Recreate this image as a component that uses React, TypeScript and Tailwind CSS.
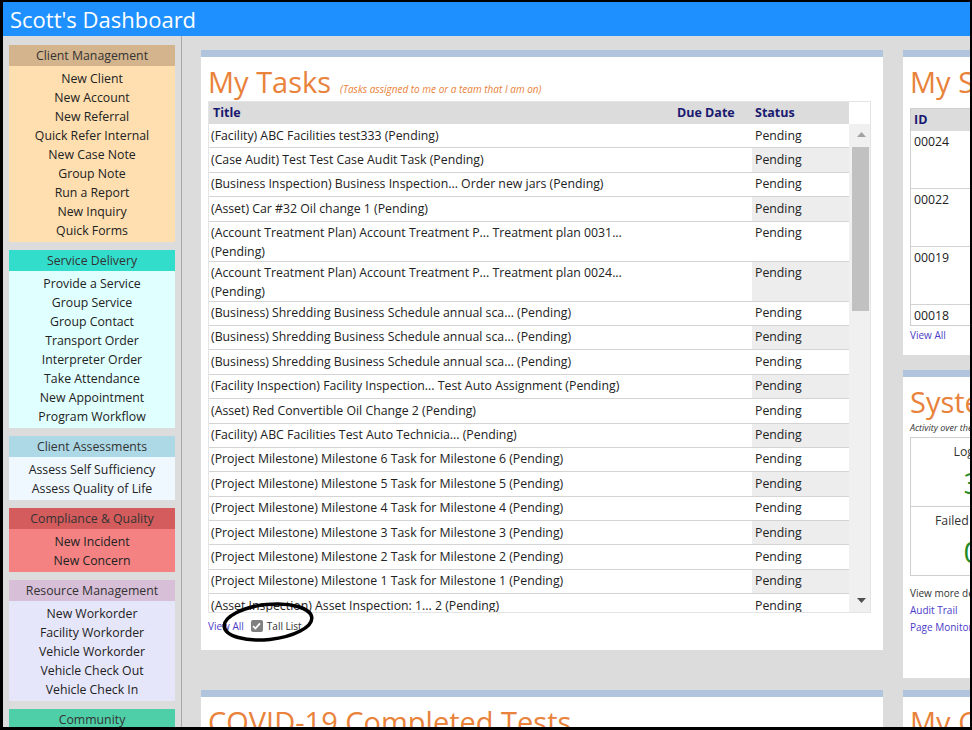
import React from 'react';

type Section = { title: string; head: string; body: string; items: string[] };

const sections: Section[] = [
  {
    title: 'Client Management',
    head: 'bg-[#d4b48c]',
    body: 'bg-[#ffdfb0]',
    items: ['New Client', 'New Account', 'New Referral', 'Quick Refer Internal', 'New Case Note', 'Group Note', 'Run a Report', 'New Inquiry', 'Quick Forms'],
  },
  {
    title: 'Service Delivery',
    head: 'bg-[#33ddcc]',
    body: 'bg-[#e0ffff]',
    items: ['Provide a Service', 'Group Service', 'Group Contact', 'Transport Order', 'Interpreter Order', 'Take Attendance', 'New Appointment', 'Program Workflow'],
  },
  {
    title: 'Client Assessments',
    head: 'bg-[#add8e6]',
    body: 'bg-[#f0f8ff]',
    items: ['Assess Self Sufficiency', 'Assess Quality of Life'],
  },
  {
    title: 'Compliance & Quality',
    head: 'bg-[#d45c5c]',
    body: 'bg-[#f48282]',
    items: ['New Incident', 'New Concern'],
  },
  {
    title: 'Resource Management',
    head: 'bg-[#d8bfd8]',
    body: 'bg-[#e6e6fa]',
    items: ['New Workorder', 'Facility Workorder', 'Vehicle Workorder', 'Vehicle Check Out', 'Vehicle Check In'],
  },
  {
    title: 'Community',
    head: 'bg-[#4fcfa8]',
    body: 'bg-[#e0fff4]',
    items: ['New Event'],
  },
];

type Task = { t: string; l2?: string };

const tasks: Task[] = [
  { t: '(Facility) ABC Facilities test333 (Pending)' },
  { t: '(Case Audit) Test Test Case Audit Task (Pending)' },
  { t: '(Business Inspection) Business Inspection... Order new jars (Pending)' },
  { t: '(Asset) Car #32 Oil change 1 (Pending)' },
  { t: '(Account Treatment Plan) Account Treatment P... Treatment plan 0031...', l2: '(Pending)' },
  { t: '(Account Treatment Plan) Account Treatment P... Treatment plan 0024...', l2: '(Pending)' },
  { t: '(Business) Shredding Business Schedule annual sca... (Pending)' },
  { t: '(Business) Shredding Business Schedule annual sca... (Pending)' },
  { t: '(Business) Shredding Business Schedule annual sca... (Pending)' },
  { t: '(Facility Inspection) Facility Inspection... Test Auto Assignment (Pending)' },
  { t: '(Asset) Red Convertible Oil Change 2 (Pending)' },
  { t: '(Facility) ABC Facilities Test Auto Technicia... (Pending)' },
  { t: '(Project Milestone) Milestone 6 Task for Milestone 6 (Pending)' },
  { t: '(Project Milestone) Milestone 5 Task for Milestone 5 (Pending)' },
  { t: '(Project Milestone) Milestone 4 Task for Milestone 4 (Pending)' },
  { t: '(Project Milestone) Milestone 3 Task for Milestone 3 (Pending)' },
  { t: '(Project Milestone) Milestone 2 Task for Milestone 2 (Pending)' },
  { t: '(Project Milestone) Milestone 1 Task for Milestone 1 (Pending)' },
  { t: '(Asset Inspection) Asset Inspection: 1... 2 (Pending)' },
];

function Bar() {
  return <div className="h-[7px] shrink-0 bg-[#b0c4de]" />;
}

function Title({ children }: { children: React.ReactNode }) {
  return <div className="text-[29px] leading-[38px] text-[#e9823a] whitespace-nowrap">{children}</div>;
}

export default function App() {
  return (
    <div className="w-[972px] h-[730px] overflow-hidden bg-black pl-[3px] pt-[2px] pr-[2px] pb-[3px] font-['Open_Sans','Noto_Sans',sans-serif]">
      <div className="w-full h-full flex flex-col bg-[#dcdcdc] overflow-hidden">
        <div className="h-[34px] shrink-0 bg-[#1e90ff] text-white text-[22px] leading-[34px] pl-[7px]">Scott's Dashboard</div>
        <div className="flex flex-1 min-h-0">
          <aside className="w-[179px] shrink-0 border-r border-[#a8a8a8] px-[6px] pt-[9px] flex flex-col gap-[8px] overflow-hidden">
            {sections.map((s) => (
              <div key={s.title} className="shrink-0">
                <div className={`h-[21px] leading-[21px] text-center text-[12.3px] text-[#333] ${s.head}`}>{s.title}</div>
                <div className={`${s.body} pt-[3px] pb-[2px] text-center text-[12.3px] leading-[19px] text-[#222]`}>
                  {s.items.map((i) => (
                    <div key={i}>{i}</div>
                  ))}
                </div>
              </div>
            ))}
          </aside>
          <main className="flex-1 min-w-0 pl-[19px] pt-[14px] flex gap-[20px] overflow-hidden">
            {/* Left column */}
            <div className="w-[682px] shrink-0 flex flex-col">
              <Bar />
              <div className="h-[593px] shrink-0 bg-white pt-[6px] pl-[7px] pr-[12px] relative">
                <div className="flex items-baseline">
                  <Title>My Tasks</Title>
                  <span className="ml-[9px] text-[10px] italic text-[#e9823a]">(Tasks assigned to me or a team that I am on)</span>
                </div>
                <div className="border border-[#e4e4e4]">
                  <div className="flex h-[22px] leading-[22px] text-[12.5px] font-bold text-[#191970]">
                    <div className="w-[465px] bg-[#dcdcdc] pl-[4px]">Title</div>
                    <div className="w-[78px] bg-[#dcdcdc] pl-[3px]">Due Date</div>
                    <div className="w-[97px] bg-[#dcdcdc] pl-[3px]">Status</div>
                    <div className="flex-1 bg-white" />
                  </div>
                  <div className="flex h-[488px]">
                    <div className="w-[640px] overflow-hidden">
                      {tasks.map((r, idx) => (
                        <div
                          key={idx}
                          className={`flex border-b border-[#d4d4d4] text-[12.3px] leading-[19px] text-[#222] ${r.l2 ? 'h-[40px]' : 'h-[24.4px]'}`}
                        >
                          <div className="w-[465px] pl-[2px] pt-[1.5px] whitespace-nowrap">
                            {r.t}
                            {r.l2 && (
                              <>
                                <br />
                                {r.l2}
                              </>
                            )}
                          </div>
                          <div className="w-[78px]" />
                          <div className={`w-[97px] pl-[3px] pt-[1.5px] ${idx % 2 === 1 ? 'bg-[#ededed]' : 'bg-white'}`}>Pending</div>
                        </div>
                      ))}
                    </div>
                    <div className="flex-1 bg-[#f0f0f0] flex flex-col">
                      <div className="h-[20px] flex items-center justify-center pl-[3px]">
                        <svg width="9" height="5" viewBox="0 0 9 5">
                          <polygon points="0,5 9,5 4.5,0" fill="#a3a3a3" />
                        </svg>
                      </div>
                      <div className="ml-[3px] w-[17px] h-[164px] mt-[3px] bg-[#c1c1c1]" />
                      <div className="flex-1" />
                      <div className="h-[24px] flex items-center justify-center pl-[3px]">
                        <svg width="9" height="5" viewBox="0 0 9 5">
                          <polygon points="0,0 9,0 4.5,5" fill="#505050" />
                        </svg>
                      </div>
                    </div>
                  </div>
                </div>
                <div className="flex items-center h-[16px] mt-[5px]">
                  <span className="text-[10px] text-[#4b3bc8]">View All</span>
                  <span className="ml-[7px] w-[12px] h-[12px] rounded-[2px] bg-[#808080] flex items-center justify-center">
                    <svg width="9" height="8" viewBox="0 0 9 8">
                      <path d="M1 4.2 L3.4 6.5 L8 1.3" stroke="white" strokeWidth="1.8" fill="none" />
                    </svg>
                  </span>
                  <span className="ml-[4px] text-[10px] text-[#333]">Tall List</span>
                </div>
                <svg className="absolute left-[18px] top-[542px]" width="98" height="46" viewBox="0 0 98 46">
                  <ellipse cx="49" cy="23" rx="44" ry="17.5" transform="rotate(-6 49 23)" stroke="black" strokeWidth="3.5" fill="none" />
                </svg>
              </div>
              <div className="h-[40px] shrink-0" />
              <Bar />
              <div className="h-[200px] shrink-0 bg-white pt-[6px] pl-[7px]">
                <Title>COVID-19 Completed Tests</Title>
              </div>
            </div>

            {/* Right column */}
            <div className="w-[682px] shrink-0 flex flex-col">
              <Bar />
              <div className="h-[298px] shrink-0 bg-white pt-[6px] pl-[7px]">
                <Title>My Service Requests</Title>
                <div className="mt-[7px] w-[600px] h-[218px] border border-[#cfcfcf] overflow-hidden">
                  <div className="h-[22px] leading-[22px] bg-[#dcdcdc] pl-[3px] text-[12.5px] font-bold text-[#191970]">ID</div>
                  {['00024', '00022', '00019', '00018'].map((id) => (
                    <div key={id} className="h-[58px] border-b border-[#d4d4d4] pl-[3px] pt-[1px] text-[12.3px] leading-[19px] text-[#222]">
                      {id}
                    </div>
                  ))}
                </div>
                <div className="mt-[2px] text-[10px] leading-[14px] text-[#4b3bc8]">View All</div>
              </div>
              <div className="h-[15px] shrink-0" />
              <Bar />
              <div className="h-[301px] shrink-0 bg-white pt-[6px] pl-[7px]">
                <Title>System Activity</Title>
                <div className="text-[9px] leading-[14px] italic text-[#333] whitespace-nowrap">Activity over the last 24 hours</div>
                <div className="mt-[2px] w-[124px] border border-[#cfcfcf] text-center">
                  <div className="h-[69px] border-b border-[#cfcfcf] pt-[5px]">
                    <div className="text-[12.3px] leading-[17px] text-[#333]">Logins</div>
                    <div className="mt-[5px] text-[30px] leading-[36px] text-[#228b22]">3</div>
                  </div>
                  <div className="h-[68px] pt-[5px]">
                    <div className="text-[12.3px] leading-[17px] text-[#333] whitespace-nowrap">Failed Logins</div>
                    <div className="mt-[5px] text-[30px] leading-[36px] text-[#228b22]">0</div>
                  </div>
                </div>
                <div className="mt-[9px] text-[10px] leading-[17px] text-[#333] whitespace-nowrap">View more details in:</div>
                <div className="text-[10px] leading-[17px] text-[#4b3bc8]">Audit Trail</div>
                <div className="text-[10px] leading-[17px] text-[#4b3bc8]">Page Monitor</div>
              </div>
              <div className="h-[12px] shrink-0" />
              <Bar />
              <div className="h-[200px] shrink-0 bg-white pt-[6px] pl-[7px]">
                <Title>My Caseload</Title>
              </div>
            </div>
          </main>
        </div>
      </div>
    </div>
  );
}
